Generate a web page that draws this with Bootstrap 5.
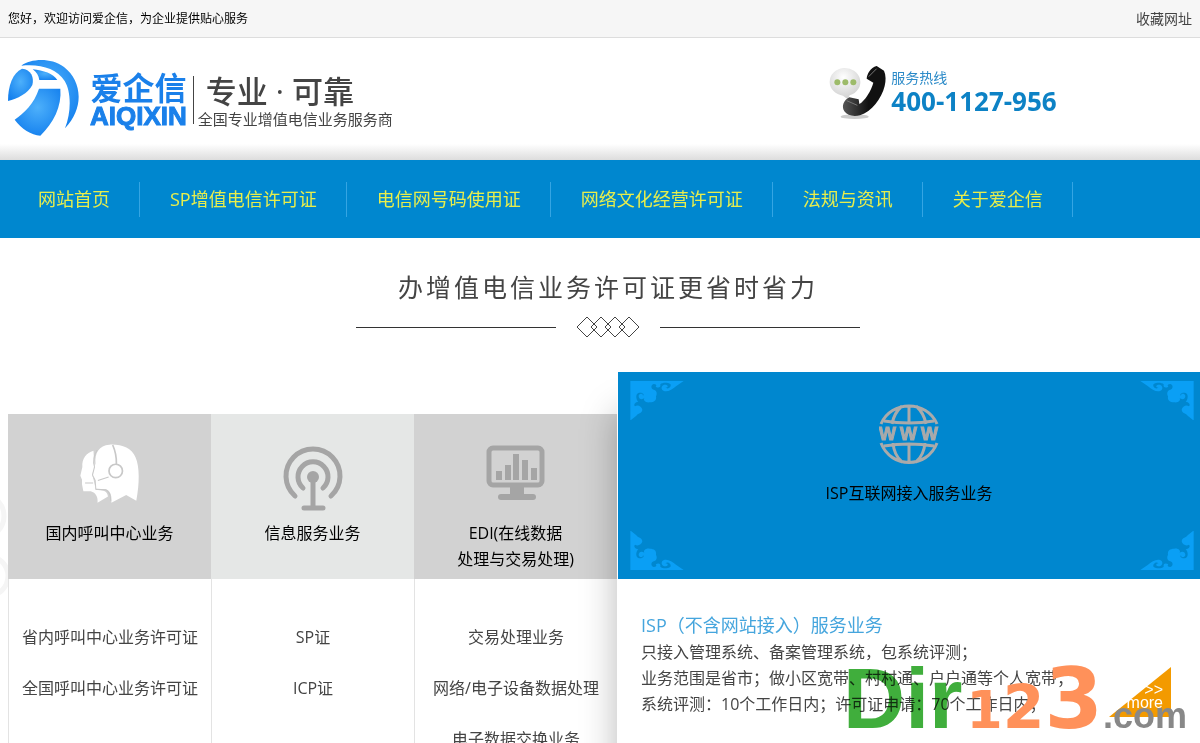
<!DOCTYPE html>
<html lang="zh-CN">
<head>
<meta charset="utf-8">
<meta name="viewport" content="width=device-width, initial-scale=1">
<title>爱企信</title>
<link href="https://cdn.jsdelivr.net/npm/bootstrap@5.3.0/dist/css/bootstrap.min.css" rel="stylesheet">
<style>
body{font-family:"Open Sans","Noto Sans CJK SC",sans-serif;font-size:16px;line-height:26px;color:#444;background:#fff;overflow-x:hidden}
a{text-decoration:none;color:inherit}
.topbar{height:38px;background:#f6f6f6;border-bottom:1px solid #ddd;font-size:12px;color:#000}
.topbar a{font-size:14px;color:#444}
.masthead{height:122px;background:linear-gradient(#fff 0,#fff 106px,#ddd 122px)}
.masthead .row{padding-top:22px}
.brand-name{color:#1a80ea;text-align:center;margin-left:10px}
.brand-cn{font-size:32px;line-height:32px;font-weight:700}
.brand-en{font:700 26px/24px "Liberation Sans",sans-serif;-webkit-text-stroke:1px #1a80ea}
.slogan{border-left:1px solid #444;height:48px;margin-left:6px}
.slogan-big{font-size:31px;line-height:30px;font-weight:500}
.slogan-sub{font-size:15px;line-height:18px}
.hotline-label{font-size:14px;line-height:20px;color:#2b8ac8}
.hotline-num{font-size:26px;line-height:26px;font-weight:700;color:#0d82c5}
.mainnav{background:#0087cf;min-height:78px}
.mainnav a{display:block;font-size:18px;line-height:35px;padding:0 29px 0 30px;color:#e8ee4c;border-right:1px solid #35a5e3;white-space:nowrap}
.section-title{font-size:25px;line-height:34px;letter-spacing:3px;color:#444}
.rule{width:200px;height:1px;background:#333}
.services{display:grid;grid-template-columns:203fr 203fr 203fr 583fr;padding-top:10px}
.svc{margin-top:42px;border-left:1px solid #e3e3e3;text-align:center}
.svc-head{height:165px;background:#d2d2d2;color:#000;margin-left:-1px;padding-top:26px}
.svc-head.pale{background:#e5e7e6}
.svc ul{line-height:51px;padding-top:33px}
.feature{background:#fff;box-shadow:0 40px 34px rgba(0,0,0,.28);border-left:1px solid #fff;min-height:470px}
.feature-head{height:207px;background:#0087cf;color:#000}
.orn{width:54px;height:39px;fill:#0a9ff5;position:absolute}
.orn-l{left:12px}.orn-r{right:6px}.orn-t{top:9px}.orn-b{bottom:9px}
.orn-r.orn-t{transform:scale(-1,1)}
.orn-l.orn-b{transform:scale(1,-1)}
.orn-r.orn-b{transform:scale(-1,-1)}
.feature h2{font-size:18px;line-height:28px;color:#45a5dd;font-weight:400}
.feature-text{padding-left:23px}
.more-link{right:29px;top:88px;width:62px;height:50px;color:#fff;font:16px/13px "Liberation Sans",sans-serif}
.more-link svg{position:absolute;inset:0}
.stamp{right:13px;top:76px;font:700 86px/86px "Liberation Sans",sans-serif;pointer-events:none}
.stamp-dir{color:#40ae3c;mix-blend-mode:multiply;margin-right:4px}
.stamp-num{color:#ff915a;font-family:"DejaVu Sans",sans-serif}
.stamp-one{font-size:52px}.stamp-two{font-size:60px}.stamp-three{font-size:84px}
.stamp-com{font-size:36px;color:#888}
.arcs{position:absolute;left:0;top:130px;width:8px;height:112px}
</style>
</head>
<body>
<div class="topbar d-flex align-items-center justify-content-between px-2">
  <span>您好，欢迎访问爱企信，为企业提供贴心服务</span>
  <a href="#">收藏网址</a>
</div>

<header class="masthead px-2">
  <div class="row g-0">
    <div class="col-8 d-flex">
      <a href="#" class="d-flex">
        <svg width="72" height="76" viewBox="24 183 216 228" aria-hidden="true">
          <defs><radialGradient id="lg" cx=".5" cy=".4" r=".65"><stop offset="0" stop-color="#4db0fb"/><stop offset="1" stop-color="#1480ee"/></radialGradient></defs>
          <g fill="url(#lg)">
            <path d="M64 200C92 180 150 174 192 204C246 246 254 326 195 388C214 340 214 278 194 246C170 208 120 194 64 200Z"/>
            <path d="M24 306C24 260 38 222 66 209C93 211 103 235 97 258C84 284 52 299 24 306Z"/>
            <path d="M98 211C130 214 160 224 172 243H118C116 230 110 219 98 211Z"/>
            <path d="M117 269H181C186 322 160 372 121 410C94 408 64 390 44 362C74 340 102 314 117 269Z"/>
          </g>
        </svg>
        <span class="brand-name mt-2 pt-1"><span class="brand-cn d-block">爱企信</span><span class="brand-en d-block">AIQIXIN</span></span>
      </a>
      <div class="slogan mt-3 ps-1">
        <div class="slogan-big ps-2">专业 · 可靠</div>
        <div class="slogan-sub pt-1">全国专业增值电信业务服务商</div>
      </div>
    </div>
    <div class="col-4 d-flex ps-4">
      <svg class="ms-2 mt-1" width="58" height="56" viewBox="85 192 174 168" aria-hidden="true">
        <defs><radialGradient id="bub" cx=".45" cy=".3" r=".8"><stop offset="0" stop-color="#fff"/><stop offset="1" stop-color="#c9c9c9"/></radialGradient>
        <linearGradient id="hs"><stop offset="0" stop-color="#555"/><stop offset=".6" stop-color="#111"/></linearGradient></defs>
        <ellipse cx="162" cy="350" rx="42" ry="7" fill="#ccc"/>
        <path d="M87 246a46 42 0 1 1 60 40l-6 12l-14 -11A46 42 0 0 1 87 246Z" fill="url(#bub)"/>
        <g fill="#9dbb6a"><circle cx="110" cy="247" r="9"/><circle cx="134" cy="247" r="9"/><circle cx="158" cy="247" r="9"/></g>
        <path d="M228 198L250 212C256 226 256 242 252 258C243 295 213 335 178 346C158 350 140 347 131 334C121 318 130 300 146 292L174 298L176 312C192 303 212 272 218 248L198 236C199 222 209 203 228 198Z" fill="url(#hs)"/>
        <path d="M204 230l24-24M138 302l32 14" stroke="#777" stroke-width="3" fill="none"/>
      </svg>
      <div class="pt-2 ms-1"><div class="hotline-label">服务热线</div><div class="hotline-num">400-1127-956</div></div>
    </div>
  </div>
</header>

<nav class="mainnav d-flex align-items-center ps-2">
  <a href="#">网站首页</a><a href="#">SP增值电信许可证</a><a href="#">电信网号码使用证</a><a href="#">网络文化经营许可证</a><a href="#">法规与资讯</a><a href="#">关于爱企信</a>
</nav>

<main>
  <div class="text-center pt-4 ps-3">
    <h1 class="section-title fw-normal mb-0 mt-2">办增值电信业务许可证更省时省力</h1>
    <div class="d-flex justify-content-center align-items-center gap-3 mt-2 pt-1 mb-4">
      <span class="rule me-1"></span>
      <svg width="64" height="22" viewBox="0 0 64 22" fill="none" stroke="#444" aria-hidden="true"><path d="M1 11L11 1L21 11L11 21ZM15 11L25 1L35 11L25 21ZM29 11L39 1L49 11L39 21ZM43 11L53 1L63 11L53 21Z"/></svg>
      <span class="rule ms-1"></span>
    </div>
  </div>

  <div class="services position-relative ps-2">
    <svg class="arcs" viewBox="0 0 8 112" fill="none" stroke="#f5f5f5" stroke-width="5" aria-hidden="true"><circle cx="-18" cy="24" r="22"/><circle cx="-12" cy="84" r="20"/></svg>
    <section class="svc">
      <div class="svc-head">
        <svg class="d-block mx-auto mt-1" width="60" height="60" viewBox="243 132 178 178" aria-hidden="true">
          <path d="M283 152C262 158 248 175 250 200L244 226L249 238V252L253 272H275C290 276 297 290 295 306L326 288C325 276 318 271 308 270L290 268L284 240L279 222L286 205Z" fill="#fff"/>
          <path d="M330 134C300 136 286 158 289 190L279 224L287 238L289 264L322 267C334 272 338 288 336 306L380 283L410 300C420 250 420 200 408 172C396 143 365 132 330 134Z" fill="#fff"/>
          <g fill="none" stroke="#c8c8c8" stroke-width="5"><path d="M340 135Q352 162 351 192"/><circle cx="349" cy="212" r="20"/><path d="M328 230L296 240M282 248H258M294 150Q278 175 286 200L280 224L288 240L290 266L320 268Q334 276 334 300" stroke-width="3"/></g>
        </svg>
        <div class="pt-3">国内呼叫中心业务</div>
      </div>
      <ul class="list-unstyled mb-0"><li>省内呼叫中心业务许可证</li><li>全国呼叫中心业务许可证</li></ul>
    </section>
    <section class="svc">
      <div class="svc-head pale">
        <svg class="d-block mx-auto mt-2 overflow-visible" width="60" height="60" viewBox="0 0 60 60" fill="none" stroke="#a5a5a5" stroke-width="5" stroke-linecap="round" aria-hidden="true">
          <path d="M12 48A27 27 0 1 1 48 48M20 40A15 15 0 1 1 40 40" /><circle cx="30" cy="29" r="6" fill="#a5a5a5" stroke="none"/><path d="M30 30V60M21 60H40"/>
        </svg>
        <div class="pt-2 mt-1">信息服务业务</div>
      </div>
      <ul class="list-unstyled mb-0"><li>SP证</li><li>ICP证</li></ul>
    </section>
    <section class="svc">
      <div class="svc-head">
        <svg class="d-block mx-auto mt-1" width="60" height="60" viewBox="0 0 60 60" fill="#a5a5a5" aria-hidden="true">
          <rect x="3" y="4" width="53" height="37" rx="4" fill="none" stroke="#a5a5a5" stroke-width="5"/>
          <path d="M10 27h6v9h-6zM19 21h6v15h-6zM27 10h6v26h-6zM36 16h6v20h-6zM45 24h6v12h-6zM24 42h14v8H24z"/><rect x="12" y="50" width="38" height="6" rx="3"/>
        </svg>
        <div class="pt-3">EDI(在线数据<br>处理与交易处理)</div>
      </div>
      <ul class="list-unstyled mb-0"><li>交易处理业务</li><li>网络/电子设备数据处理</li><li>电子数据交换业务</li></ul>
    </section>
    <section class="feature position-relative">
      <div class="feature-head position-relative text-center pt-4">
        <svg width="0" height="0" class="position-absolute" aria-hidden="true"><symbol id="corner" viewBox="0 0 160 117"><path d="M0 0H160L138 15C124 28 106 36 96 27C90 18 98 8 109 12C116 16 110 22 105 19C112 28 125 17 120 9C112 4 96 4 90 10C92 20 84 22 76 17C80 14 78 9 70 9C60 12 62 24 70 26C78 28 82 36 77 46C79 58 72 64 58 64C46 66 38 58 42 52C32 58 24 52 25 44C28 36 38 37 38 44C44 40 34 32 24 36C14 40 18 58 24 62C12 64 10 72 14 76C22 70 34 76 36 86C35 98 22 96 18 104L2 117H0Z"/></symbol></svg>
        <svg class="orn orn-l orn-t"><use href="#corner"/></svg>
        <svg class="orn orn-r orn-t"><use href="#corner"/></svg>
        <svg class="orn orn-l orn-b"><use href="#corner"/></svg>
        <svg class="orn orn-r orn-b"><use href="#corner"/></svg>
        <svg class="d-block mx-auto mt-2" width="60" height="60" viewBox="0 0 60 60" fill="none" stroke="#aaa" stroke-width="3" aria-hidden="true">
          <path d="M2 20C12 -4 48 -4 58 20M2 39C12 65 48 65 58 39M30 1V19M30 40V59M23 2Q15 9 13 20M37 2Q45 9 47 20M23 58Q15 51 14 39M37 58Q45 51 46 39M5 17Q30 21 55 17M5 42Q30 38 55 42"/>
          <text x="0 21 42" y="36" font-family="Liberation Sans" font-weight="700" font-size="18" fill="#aaa" stroke="#aaa" stroke-width="1">WWW</text>
        </svg>
        <div class="pt-2 mt-2">ISP互联网接入服务业务</div>
      </div>
      <div class="feature-text position-relative pt-4">
        <h2 class="mb-0 pt-2">ISP（不含网站接入）服务业务</h2>
        <p class="mb-0">只接入管理系统、备案管理系统，包系统评测；<br>业务范围是省市；做小区宽带、村村通、户户通等个人宽带；<br>系统评测：10个工作日内；许可证申请：70个工作日内；</p>
        <a href="#" class="more-link position-absolute d-block"><svg viewBox="0 0 62 50" aria-hidden="true"><path d="M62 0V50H0Z" fill="#f39a00"/></svg><span class="position-relative d-block text-end pt-3 pe-2">&gt;&gt;<br>more</span></a>
        <div class="stamp position-absolute d-flex align-items-baseline" aria-hidden="true"><span class="stamp-dir">Dir</span><span class="stamp-num"><span class="stamp-one">1</span><span class="stamp-two">2</span><span class="stamp-three">3</span></span><span class="stamp-com">.com</span></div>
      </div>
    </section>
  </div>
</main>
<script src="https://cdn.jsdelivr.net/npm/bootstrap@5.3.0/dist/js/bootstrap.bundle.min.js"></script>
</body>
</html>
